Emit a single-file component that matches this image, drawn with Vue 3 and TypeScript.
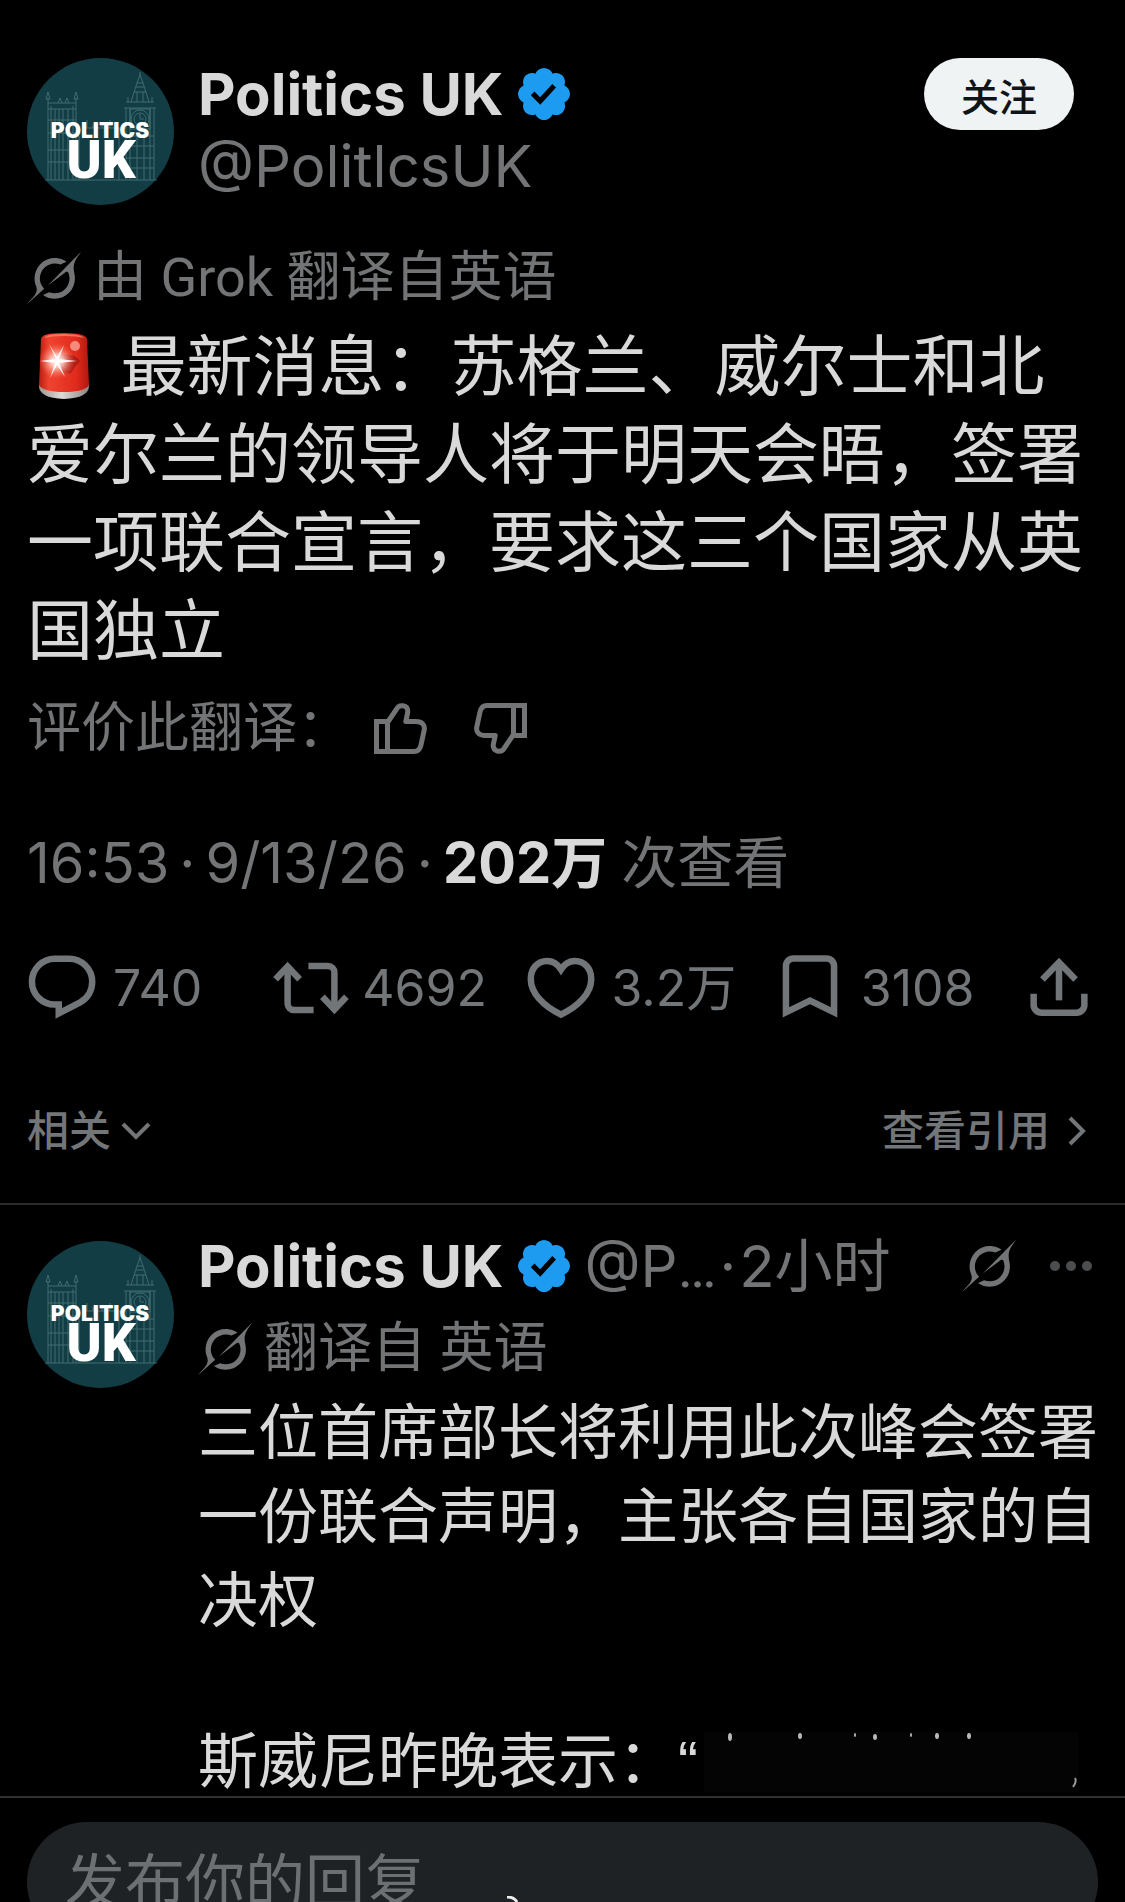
<script setup lang="ts">
import { defineComponent, h, ref } from 'vue'

interface Action {
  id: string
  label: string
  count: string
  paths: string[]
}

const actions: Action[] = [
  {
    id: 'reply',
    label: '回复',
    count: '740',
    paths: [
      'M9.8 3H14.2A7.1 7.1 0 0 1 21.3 10.1C21.3 12.9 19.8 15.2 17.6 16.4L11 19.8V17.1H9.8A7 7 0 0 1 9.8 3Z',
    ],
  },
  {
    id: 'repost',
    label: '转帖',
    count: '4692',
    paths: [
      'M4.8 5.4V16.8A2 2 0 0 0 6.8 18.8H12.8',
      'M1.1 9.3L4.8 5.4L8.5 9.3',
      'M19.2 18.6V7.2A2 2 0 0 0 17.2 5.2H11.2',
      'M15.5 14.7L19.2 18.6L22.9 14.7',
    ],
  },
  {
    id: 'like',
    label: '喜欢',
    count: '3.2万',
    paths: [
      'M12 6.3C10.8 4.4 9.3 3.7 7.7 3.7C4.8 3.7 2.7 6 2.7 9.2C2.7 13.6 6.6 17.6 12 20.2C17.4 17.6 21.3 13.6 21.3 9.2C21.3 6 19.2 3.7 16.3 3.7C14.7 3.7 13.2 4.4 12 6.3Z',
    ],
  },
  {
    id: 'bookmark',
    label: '书签',
    count: '3108',
    paths: ['M4.6 19.5V5.2A2.3 2.3 0 0 1 6.9 2.9H17.1A2.3 2.3 0 0 1 19.4 5.2V19.5L12 15.9Z'],
  },
  {
    id: 'share',
    label: '分享',
    count: '',
    paths: [
      'M12 4V15.8',
      'M6.9 9.4L12 4.1L17.1 9.4',
      'M4.2 13.8V17.2A2.4 2.4 0 0 0 6.6 19.6H17.4A2.4 2.4 0 0 0 19.8 17.2V13.8',
    ],
  },
]

const draft = ref('')

const GrokIcon = defineComponent({
  render: () =>
    h('svg', { viewBox: '0 0 33 32', fill: 'currentColor', 'aria-hidden': 'true' }, [
      h('path', {
        d: 'M12.745 20.54l10.97-8.19c.539-.4 1.307-.244 1.564.38 1.349 3.288.746 7.241-1.938 9.955-2.683 2.714-6.417 3.31-9.83 1.954l-3.728 1.745c5.347 3.697 11.84 2.782 15.898-1.324 3.219-3.255 4.216-7.692 3.284-11.693l.008.009c-1.351-5.878.332-8.227 3.782-13.031L33 0l-4.54 4.59v-.014L12.743 20.544m-2.263 1.987c-3.837-3.707-3.175-9.446.1-12.755 2.42-2.449 6.388-3.448 9.852-1.979l3.72-1.737c-.67-.49-1.53-1.017-2.515-1.387-4.455-1.854-9.789-.931-13.41 2.728-3.483 3.523-4.579 8.94-2.697 13.561 1.405 3.454-.899 5.898-3.22 8.364C1.49 30.2.666 31.074 0 32l10.478-9.466',
      }),
    ]),
})

const VerifiedIcon = defineComponent({
  render: () =>
    h('svg', { viewBox: '1.6 1.6 18.8 18.8', fill: '#1d9bf0', role: 'img', 'aria-label': '认证账号' }, [
      h('path', {
        d: 'M20.396 11c-.018-.646-.215-1.275-.57-1.816-.354-.54-.852-.972-1.438-1.246.223-.607.27-1.264.14-1.897-.131-.634-.437-1.218-.882-1.687-.47-.445-1.053-.75-1.687-.882-.633-.13-1.29-.083-1.897.14-.273-.587-.704-1.086-1.245-1.44S11.647 1.62 11 1.604c-.646.017-1.273.213-1.813.568s-.969.854-1.24 1.44c-.608-.223-1.267-.272-1.902-.14-.635.13-1.22.436-1.69.882-.445.47-.749 1.055-.878 1.688-.13.633-.08 1.29.144 1.896-.587.274-1.087.705-1.443 1.245-.356.54-.555 1.17-.574 1.817.02.647.218 1.276.574 1.817.356.54.856.972 1.443 1.245-.224.606-.274 1.263-.144 1.896.13.634.433 1.218.877 1.688.47.443 1.054.747 1.687.878.633.132 1.29.084 1.897-.136.274.586.705 1.084 1.246 1.439.54.354 1.17.551 1.816.569.647-.016 1.276-.213 1.817-.567s.972-.854 1.245-1.44c.604.239 1.266.296 1.903.164.636-.132 1.22-.447 1.68-.907.46-.46.776-1.044.908-1.681s.075-1.299-.165-1.903c.586-.274 1.084-.705 1.439-1.246.354-.54.551-1.17.569-1.816zM9.662 14.85l-3.429-3.428 1.293-1.302 2.072 2.072 4.4-4.794 1.347 1.246z',
      }),
    ]),
})

const line = (d: string) => h('path', { d })

const AvatarArt = defineComponent({
  render: () =>
    h('svg', { viewBox: '0 0 147 147', role: 'img', 'aria-label': 'Politics UK' }, [
      h('circle', { cx: 73.5, cy: 73.5, r: 73.5, fill: '#133d44' }),
      h('g', { fill: 'none', stroke: '#4d7c80', 'stroke-width': 1, opacity: 0.75 }, [
        line('M21 122V40M24 122V48M46 122V48M49 122V40M19 41H23L21 34ZM47 41H51L49 34ZM31 45L33 40L35 45M38 45L40 40L42 45M21 45H49M21 51H49M21 62H49M21 75H49M21 92H49M21 104H49'),
        line('M28 51V122M32 51V122M36 51V122M41 51V122'),
        line('M99 122V50M103 122V50M123 122V50M127 122V50M97 50H129M99 44H127M99 78H127M99 88H127M99 100H127M99 110H127M101 44V39M125 44V39M104 44L110 25H116L122 44M110 25L113 17L116 25M107 34H119M109 29H117M113 18V14M110 34V44M116 34V44M110 78V122M117 78V122'),
        h('circle', { cx: 113, cy: 61, r: 9 }),
        h('circle', { cx: 113, cy: 61, r: 6 }),
        line('M113 56V61H117M103 51H123V71H103Z'),
        line('M18 122H130M52 122V78M60 70V62M66 70V66M75 70V66M83 70V62M92 122V70M56 70H99'),
      ]),
      h('text', { class: 'art-top', x: 73, y: 80, 'text-anchor': 'middle' }, 'POLITICS'),
      h('text', { class: 'art-main', x: 74, y: 120, 'text-anchor': 'middle' }, 'UK'),
    ]),
})

const ThumbIcon = defineComponent({
  render: () =>
    h(
      'svg',
      {
        viewBox: '0 0 53 51',
        fill: 'none',
        stroke: 'currentColor',
        'stroke-width': 5,
        'stroke-linejoin': 'round',
        'aria-hidden': 'true',
      },
      [
        h('path', { 'stroke-linejoin': 'miter', d: 'M2.5 18.5H13.5V48.5H2.5Z' }),
        line('M13.5 19.5L22.3 6.5C25 .8 34 1.6 33.8 9L31.8 18.5H42C48 18.5 51.2 22 50.2 27L47 42C46 46.5 43.5 48.5 40 48.5H13.5'),
      ],
    ),
})
</script>

<template>
  <div class="app">
    <main class="feed">
      <article class="post">
        <header class="post-head">
          <AvatarArt class="avatar" />
          <div class="who">
            <div class="name-line">
              <strong class="name">Politics UK</strong>
              <VerifiedIcon class="badge" />
            </div>
            <a class="handle" href="#profile">@PolitlcsUK</a>
          </div>
          <button class="follow" type="button">关注</button>
        </header>

        <div class="translated">
          <GrokIcon class="grok" />
          <span>由 Grok 翻译自英语</span>
        </div>

        <p class="lead">
          <svg class="siren" viewBox="0 0 75 66" role="img" aria-label="警报">
            <defs>
              <linearGradient id="glass" x1="0" x2="1" y1="0" y2="0">
                <stop offset="0" stop-color="#b81d12" />
                <stop offset=".2" stop-color="#f0442f" />
                <stop offset=".75" stop-color="#e02a1c" />
                <stop offset="1" stop-color="#b0170f" />
              </linearGradient>
              <linearGradient id="base" x1="0" x2="1" y1="0" y2="0">
                <stop offset="0" stop-color="#9d9590" />
                <stop offset=".45" stop-color="#dedad6" />
                <stop offset="1" stop-color="#8b827e" />
              </linearGradient>
              <radialGradient id="glow">
                <stop offset="0" stop-color="#fff" />
                <stop offset=".35" stop-color="#ffd9cf" stop-opacity=".85" />
                <stop offset="1" stop-color="#ff6a50" stop-opacity="0" />
              </radialGradient>
            </defs>
            <path fill="url(#base)" d="M12 53Q12 65 37 66Q62 65 62 53L60 48H14Z" />
            <path fill="url(#glass)" d="M14 6Q14 0 37 0Q59 0 60 6L62 52Q58 59 37 59Q16 59 12 52Z" />
            <path fill="#ff9c86" opacity=".6" d="M17 5Q20 1 37 1Q54 1 57 5Q50 3 37 3Q24 3 17 5Z" />
            <path fill="#8d120c" opacity=".55" d="M34 22Q48 20 53 28Q48 33 44 40Q36 42 30 34Z" />
            <circle cx="48" cy="13" r="5" fill="#ffb3a5" opacity=".7" />
            <circle cx="30" cy="28" r="18" fill="url(#glow)" />
            <path fill="#fff" opacity=".9" d="M30 28L22 11L30 24L37 12L32 26L50 28L32 30L38 44L30 32L23 45L28 30L13 28L28 26Z" />
          </svg>
          最新消息：苏格兰、威尔士和北爱尔兰的领导人将于明天会晤，签署一项联合宣言，要求这三个国家从英国独立
        </p>

        <div class="rate">
          <span>评价此翻译：</span>
          <button class="thumb" type="button" aria-label="翻译得好"><ThumbIcon /></button>
          <button class="thumb down" type="button" aria-label="翻译得不好"><ThumbIcon /></button>
        </div>

        <div class="meta">
          <span>16:53</span>
          <span>·</span>
          <span>9/13/26</span>
          <span>·</span>
          <strong>202万</strong>
          <span class="views">次查看</span>
        </div>

        <div class="actions">
          <button v-for="a in actions" :key="a.id" class="action" type="button" :aria-label="a.label">
            <svg viewBox="0 0 24 24" aria-hidden="true">
              <path v-for="d in a.paths" :key="d" :d="d" />
            </svg>
            <span v-if="a.count">{{ a.count }}</span>
          </button>
        </div>

        <div class="related">
          <button class="related-btn" type="button">
            相关
            <svg class="chev-down" viewBox="0 0 30 18" aria-hidden="true"><path d="M2 2L15 15L28 2" /></svg>
          </button>
          <a class="related-btn quotes" href="#quotes">
            查看引用
            <svg class="chev-right" viewBox="0 0 18 30" aria-hidden="true"><path d="M2 2L15 15L2 28" /></svg>
          </a>
        </div>
      </article>

      <article class="reply">
        <AvatarArt class="avatar" />
        <div class="reply-main">
          <div class="reply-head">
            <strong class="name">Politics UK</strong>
            <VerifiedIcon class="badge" />
            <div class="byline">
              <span>@P<span class="cut">…</span></span>
              <span>·</span>
              <span>2小时</span>
            </div>
            <button class="icon-btn" type="button" aria-label="Grok"><GrokIcon class="grok" /></button>
            <button class="icon-btn more" type="button" aria-label="更多">
              <svg viewBox="0 0 42 10" aria-hidden="true">
                <circle cx="5" cy="5" r="5" /><circle cx="21" cy="5" r="5" /><circle cx="37" cy="5" r="5" />
              </svg>
            </button>
          </div>
          <div class="translated">
            <GrokIcon class="grok" />
            <span>翻译自 英语</span>
          </div>
          <div class="reply-text">
            <p>三位首席部长将利用此次峰会签署一份联合声明，主张各自国家的自决权</p>
            <p class="quote-line">
              <span>斯威尼昨晚表示：<span class="mark">“</span></span>
              <svg class="smudge" viewBox="0 0 374 60" aria-hidden="true">
                <rect width="374" height="60" fill="#040404" />
                <g fill="#b8b8b8">
                  <ellipse cx="26" cy="5" rx="2" ry="4" /><ellipse cx="96" cy="4" rx="2" ry="3" />
                  <ellipse cx="151" cy="3" rx="1" ry="2" /><ellipse cx="171" cy="5" rx="2" ry="3" />
                  <ellipse cx="207" cy="3" rx="1" ry="2" /><ellipse cx="233" cy="4" rx="2" ry="3" />
                  <ellipse cx="265" cy="4" rx="2" ry="3" />
                </g>
                <path d="M371 46Q373 50 369 55" fill="none" stroke="#999" stroke-width="2" />
              </svg>
            </p>
          </div>
        </div>
      </article>
    </main>

    <footer class="dock">
      <input v-model="draft" class="compose" type="text" placeholder="发布你的回复" aria-label="发布你的回复" />
      <svg class="speck" viewBox="0 0 20 6" aria-hidden="true"><path d="M1 1Q8 1 11 6" /></svg>
    </footer>
  </div>
</template>

<style>
body {
  margin: 0;
  background: #000;
}
</style>

<style scoped>
.app {
  display: flex;
  flex-direction: column;
  height: 100vh;
  overflow: hidden;
  background: #000;
  color: #d9d9d9;
  font-family: Inter, 'Noto Sans CJK SC', sans-serif;
  text-spacing-trim: space-all;
}
.app :deep(svg) {
  flex: none;
}
button {
  margin: 0;
  padding: 0;
  border: 0;
  background: none;
  color: inherit;
  font: inherit;
  cursor: pointer;
}
a {
  color: inherit;
  text-decoration: none;
}
p {
  margin: 0;
}
.feed {
  flex: 1;
  min-height: 0;
  overflow: hidden;
}
.post {
  padding: 58px 27px 42px;
  border-bottom: 2px solid #2a2c2e;
}
.post-head {
  display: flex;
  align-items: flex-start;
}
.avatar {
  width: 147px;
  height: 147px;
}
.avatar :deep(text) {
  fill: #fff;
  font-weight: 900;
}
.avatar :deep(.art-top) {
  font-family: Inter, sans-serif;
  font-size: 21px;
}
.avatar :deep(.art-main) {
  font-family: Roboto, sans-serif;
  font-size: 53px;
}
.who {
  flex: 1;
  min-width: 0;
  margin-left: 24px;
}
.name-line,
.reply-head {
  display: flex;
  align-items: center;
  height: 72px;
}
.name {
  font-size: 58px;
  font-weight: 700;
  line-height: 72px;
  white-space: nowrap;
}
.badge {
  width: 52px;
  height: 52px;
  margin-left: 14px;
}
.handle {
  display: block;
  color: #727475;
  font-size: 58px;
  line-height: 72px;
}
.follow {
  width: 150px;
  height: 72px;
  margin-right: 24px;
  border-radius: 36px;
  background: #eff3f4;
  color: #0f1419;
  font-size: 38px;
  font-weight: 500;
}
.translated {
  display: flex;
  align-items: center;
  gap: 12px;
  height: 66px;
  color: #727475;
  font-family: Roboto, 'Noto Sans CJK SC', sans-serif;
  font-size: 54px;
  line-height: 66px;
}
.post .translated {
  margin-top: 40px;
}
.grok {
  width: 54px;
  height: 54px;
}
.lead {
  margin-top: 11px;
  font-size: 66px;
  line-height: 88px;
}
.siren {
  width: 75px;
  height: 66px;
  vertical-align: -9px;
}
.rate {
  display: flex;
  align-items: center;
  height: 66px;
  margin-top: 21px;
  color: #727475;
  font-size: 54px;
  line-height: 66px;
}
.thumb {
  display: flex;
  width: 53px;
  height: 51px;
  margin-left: 23px;
}
.thumb.down {
  margin-left: 47px;
  transform: rotate(180deg);
}
.meta {
  display: flex;
  gap: 10px;
  margin-top: 69px;
  color: #727475;
  font-size: 56px;
  line-height: 66px;
  white-space: nowrap;
}
.meta strong {
  color: #d9d9d9;
  font-weight: 700;
}
.views {
  margin-left: 4px;
}
.actions {
  display: grid;
  grid-template-columns: repeat(4, 1fr) 78px;
  margin: 53px 0 0 -4px;
  color: #727679;
}
.action {
  display: flex;
  align-items: center;
  gap: 12px;
  font-size: 50px;
  line-height: 78px;
  white-space: nowrap;
}
.action svg {
  width: 78px;
  height: 78px;
  fill: none;
  stroke: currentColor;
  stroke-width: 2;
}
.related {
  display: flex;
  justify-content: space-between;
  margin-top: 74px;
}
.related-btn {
  display: flex;
  align-items: center;
  gap: 10px;
  color: #727679;
  font-size: 42px;
  font-weight: 500;
  line-height: 60px;
}
.quotes {
  gap: 18px;
  padding-right: 12px;
}
.related-btn svg {
  fill: none;
  stroke: currentColor;
  stroke-width: 4;
}
.chev-down {
  width: 30px;
  height: 18px;
}
.chev-right {
  width: 18px;
  height: 30px;
}
.reply {
  display: flex;
  align-items: flex-start;
  padding: 25px 16px 0 27px;
}
.reply .avatar {
  margin-top: 11px;
}
.reply-main {
  flex: 1;
  min-width: 0;
  margin-left: 24px;
}
.byline {
  display: flex;
  flex: 1;
  gap: 3px;
  margin-left: 15px;
  color: #727475;
  font-size: 58px;
  line-height: 72px;
  white-space: nowrap;
}
.cut {
  font-family: Roboto, sans-serif;
}
.icon-btn {
  display: flex;
  color: #727475;
}
.more {
  margin: 0 17px 0 34px;
  color: #4b4d4f;
}
.more svg {
  width: 42px;
  height: 10px;
  fill: currentColor;
}
.reply .translated {
  margin-top: 14px;
}
.reply-text {
  margin-top: 8px;
  font-size: 60px;
  line-height: 84px;
}
.quote-line {
  display: flex;
  align-items: center;
  margin-top: 86px;
  line-height: 66px;
  white-space: nowrap;
}
.mark {
  font-family: 'Liberation Sans', sans-serif;
}
.smudge {
  width: 374px;
  height: 60px;
  margin-left: 6px;
}
.dock {
  position: relative;
  box-sizing: border-box;
  flex: none;
  height: 106px;
  padding: 24px 27px 0;
  border-top: 2px solid #2f3133;
  overflow: hidden;
}
.compose {
  display: block;
  box-sizing: border-box;
  width: 100%;
  height: 120px;
  padding: 0 38px;
  border: 0;
  border-radius: 60px;
  outline: 0;
  background: #1f2224;
  color: #d9d9d9;
  font: inherit;
  font-size: 60px;
}
.compose::placeholder {
  color: #6c7073;
  opacity: 1;
}
.speck {
  position: absolute;
  bottom: 0;
  left: 45%;
  width: 20px;
  height: 6px;
  fill: none;
  stroke: #eee;
  stroke-width: 3;
}
</style>
